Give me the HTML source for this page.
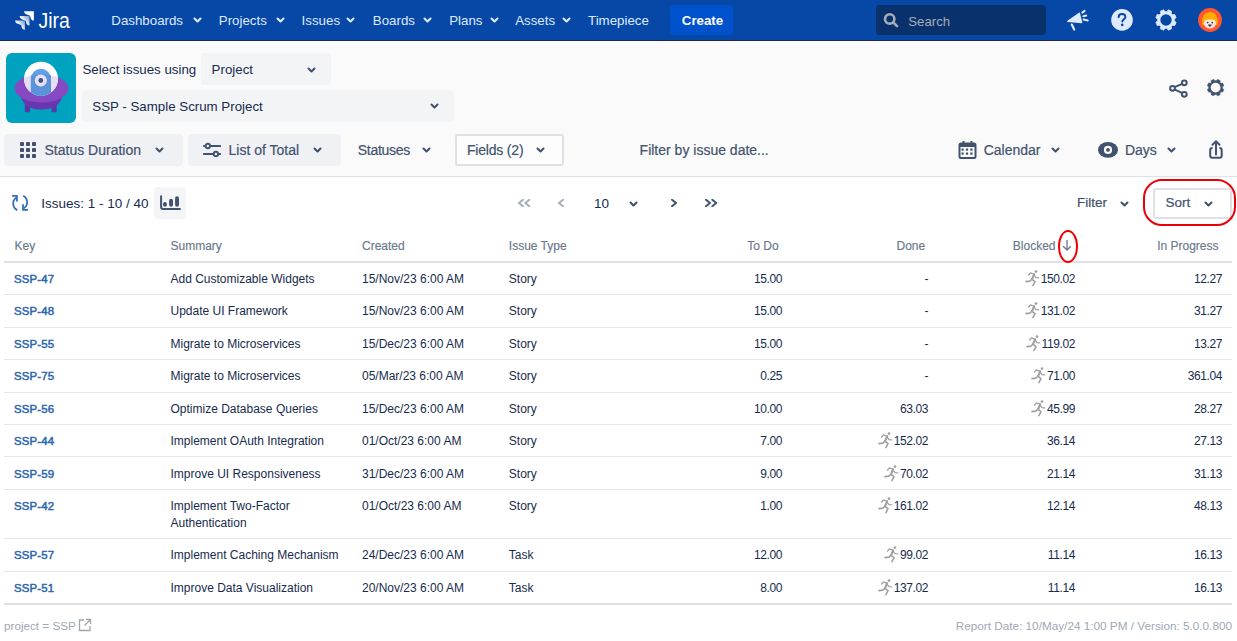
<!DOCTYPE html>
<html><head><meta charset="utf-8"><style>
html,body{margin:0;padding:0;width:1237px;height:641px;overflow:hidden;background:#fff;font-family:"Liberation Sans",sans-serif}
.t{position:absolute;white-space:nowrap;line-height:1}
.r{position:absolute}
.num{letter-spacing:-0.4px}.num svg{letter-spacing:0}
</style></head><body>
<div class="r" style="left:0px;top:0px;width:1237px;height:40px;background:#0747A6"></div>
<div class="r" style="left:0px;top:40px;width:1237px;height:1px;background:#1B2A4A"></div>
<svg class="r" style="left:12px;top:8px" width="26" height="24" viewBox="0 0 26 24">
<defs><linearGradient id="g1" x1="1" y1="0.1" x2="0.3" y2="0.7"><stop offset="0" stop-color="#fff" stop-opacity="0.45"/><stop offset="0.8" stop-color="#fff"/></linearGradient>
<path id="jl" d="M0 0 H9.9 V9.4 C8.2 9.2 6.6 8.4 6.3 5.2 C6 4.2 4 3.9 2 3.1 C1 2.6 0.3 1.5 0 0 Z"/></defs>
<use href="#jl" x="12" y="3.2" fill="#fff"/>
<use href="#jl" x="7.6" y="8.1" fill="url(#g1)"/>
<use href="#jl" x="3" y="12.4" fill="url(#g1)"/>
</svg>
<div class="t" style="left:38.5px;top:11.7px;font-size:19.5px;font-weight:400;color:#fff;transform:scaleY(1.1);transform-origin:0 85%">Jira</div>
<div class="t" style="left:111.3px;top:13.9px;font-size:13.3px;font-weight:400;color:#DEEBFF;">Dashboards</div>
<svg class="r" style="left:191.5px;top:16.2px" width="11" height="7.5" viewBox="-2 -2 11 7.5"><path d="M0.5 0.5 L3.5 3.5 L6.5 0.5" fill="none" stroke="#DEEBFF" stroke-width="2.1" stroke-linecap="round" stroke-linejoin="round"/></svg>
<div class="t" style="left:218.8px;top:13.9px;font-size:13.3px;font-weight:400;color:#DEEBFF;">Projects</div>
<svg class="r" style="left:274.5px;top:16.2px" width="11" height="7.5" viewBox="-2 -2 11 7.5"><path d="M0.5 0.5 L3.5 3.5 L6.5 0.5" fill="none" stroke="#DEEBFF" stroke-width="2.1" stroke-linecap="round" stroke-linejoin="round"/></svg>
<div class="t" style="left:301.6px;top:13.9px;font-size:13.3px;font-weight:400;color:#DEEBFF;">Issues</div>
<svg class="r" style="left:345.0px;top:16.2px" width="11" height="7.5" viewBox="-2 -2 11 7.5"><path d="M0.5 0.5 L3.5 3.5 L6.5 0.5" fill="none" stroke="#DEEBFF" stroke-width="2.1" stroke-linecap="round" stroke-linejoin="round"/></svg>
<div class="t" style="left:372.8px;top:13.9px;font-size:13.3px;font-weight:400;color:#DEEBFF;">Boards</div>
<svg class="r" style="left:421.5px;top:16.2px" width="11" height="7.5" viewBox="-2 -2 11 7.5"><path d="M0.5 0.5 L3.5 3.5 L6.5 0.5" fill="none" stroke="#DEEBFF" stroke-width="2.1" stroke-linecap="round" stroke-linejoin="round"/></svg>
<div class="t" style="left:449.2px;top:13.9px;font-size:13.3px;font-weight:400;color:#DEEBFF;">Plans</div>
<svg class="r" style="left:488.5px;top:16.2px" width="11" height="7.5" viewBox="-2 -2 11 7.5"><path d="M0.5 0.5 L3.5 3.5 L6.5 0.5" fill="none" stroke="#DEEBFF" stroke-width="2.1" stroke-linecap="round" stroke-linejoin="round"/></svg>
<div class="t" style="left:515.2px;top:13.9px;font-size:13.3px;font-weight:400;color:#DEEBFF;">Assets</div>
<svg class="r" style="left:561.0px;top:16.2px" width="11" height="7.5" viewBox="-2 -2 11 7.5"><path d="M0.5 0.5 L3.5 3.5 L6.5 0.5" fill="none" stroke="#DEEBFF" stroke-width="2.1" stroke-linecap="round" stroke-linejoin="round"/></svg>
<div class="t" style="left:588.0px;top:13.9px;font-size:13.3px;font-weight:400;color:#DEEBFF;">Timepiece</div>
<div class="r" style="left:670px;top:5px;width:63px;height:30px;background:#0052CC;border-radius:3px"></div>
<div class="t" style="left:681.8px;top:13.6px;font-size:13.3px;font-weight:700;color:#fff;">Create</div>
<div class="r" style="left:876px;top:5px;width:170px;height:30px;background:#09326C;border-radius:4px"></div>
<svg class="r" style="left:883px;top:12px" width="16" height="16" viewBox="0 0 16 16"><circle cx="6.7" cy="6.9" r="4.7" fill="none" stroke="#A5ADBA" stroke-width="2.6"/><path d="M10.2 10.4 L14 14.2" stroke="#A5ADBA" stroke-width="2.6" stroke-linecap="round"/></svg>
<div class="t" style="left:908.3px;top:14.8px;font-size:13.2px;font-weight:400;color:#A5ADBA;">Search</div>
<svg class="r" style="left:1064px;top:8px" width="28" height="24" viewBox="0 0 28 24">
<path d="M3.8 13.3 L15.3 5.2 L17.6 14.5 Z" fill="#DEEBFF" stroke="#DEEBFF" stroke-width="1.4" stroke-linejoin="round"/>
<path d="M7.8 16.6 L10.2 21.6" stroke="#DEEBFF" stroke-width="2.2" stroke-linecap="round"/>
<path d="M18.3 4.6 L20.6 2.9 M19.3 8.2 L22.2 7.6 M19.6 11.6 L23.8 12.4" stroke="#DEEBFF" stroke-width="2" stroke-linecap="round"/>
</svg>
<svg class="r" style="left:1110px;top:8px" width="24" height="24" viewBox="0 0 24 24">
<circle cx="12" cy="11.9" r="10.8" fill="#DEEBFF"/>
<path d="M8.6 9.2 C8.6 7.2 10 6 12 6 C14 6 15.4 7.3 15.4 9 C15.4 11 12.3 11.4 12.3 13.6" fill="none" stroke="#0747A6" stroke-width="1.9" stroke-linecap="round"/>
<circle cx="12.2" cy="16.9" r="1.3" fill="#0747A6"/>
</svg>
<svg class="r" style="left:1154px;top:8px" width="24" height="24" viewBox="0 0 24 24"><path d="M20.34 13.03 L22.15 14.27 L20.78 17.57 L18.62 17.17 L17.17 18.62 L17.57 20.78 L14.27 22.15 L13.03 20.34 L10.97 20.34 L9.73 22.15 L6.43 20.78 L6.83 18.62 L5.38 17.17 L3.22 17.57 L1.85 14.27 L3.66 13.03 L3.66 10.97 L1.85 9.73 L3.22 6.43 L5.38 6.83 L6.83 5.38 L6.43 3.22 L9.73 1.85 L10.97 3.66 L13.03 3.66 L14.27 1.85 L17.57 3.22 L17.17 5.38 L18.62 6.83 L20.78 6.43 L22.15 9.73 L20.34 10.97Z" fill="#DEEBFF" stroke="#DEEBFF" stroke-width="0.8" stroke-linejoin="round"/><circle cx="12" cy="12" r="5.7" fill="#0747A6"/></svg>
<svg class="r" style="left:1198px;top:8px" width="24" height="24" viewBox="0 0 24 24">
<circle cx="12" cy="12" r="11.9" fill="#FF5630"/>
<path d="M4.3 17 C3 8.5 7 4 11.9 4 C16.8 4 20.8 8.5 19.5 17 Z" fill="#FFAB00"/>
<ellipse cx="11.9" cy="15.2" rx="6.1" ry="5.2" fill="#FFE2D8"/>
<path d="M5.6 12.8 C6 8.8 8.8 7.4 11.9 7.4 C15 7.4 17.8 8.8 18.2 12.8 C16 11.2 8 11.2 5.6 12.8Z" fill="#FFAB00"/>
<circle cx="9.7" cy="14.6" r="0.85" fill="#253858"/><circle cx="14.2" cy="14.6" r="0.85" fill="#253858"/>
<path d="M10.1 16.6 H13.7 C13.7 19.2 10.1 19.2 10.1 16.6Z" fill="#253858"/><path d="M10.9 18.1 H12.9 C12.5 18.7 11.3 18.7 10.9 18.1Z" fill="#DE350B"/>
</svg>
<div class="r" style="left:0px;top:41px;width:1237px;height:135px;background:#FAFAFA"></div>
<div class="r" style="left:0px;top:176px;width:1237px;height:1px;background:#DFE1E6"></div>
<svg class="r" style="left:6px;top:53px" width="70" height="70" viewBox="0 0 70 70">
<defs><clipPath id="dome"><circle cx="35" cy="25.7" r="17"/></clipPath><clipPath id="body"><ellipse cx="35.5" cy="35.5" rx="27" ry="14"/></clipPath></defs>
<rect width="70" height="70" rx="6" fill="#00A3BF"/>
<rect x="18.8" y="45" width="5.2" height="14.3" rx="1" fill="#5A37A8"/><rect x="45.5" y="45" width="5.2" height="14.3" rx="1" fill="#5A37A8"/>
<path d="M14 40 Q16 56.5 35.5 56.5 Q55 56.5 57 40 Z" fill="#6A36B0"/>
<ellipse cx="35.5" cy="35.5" rx="27" ry="14" fill="#8549C2"/>
<circle cx="35" cy="25.7" r="17" fill="#fff"/>
<g clip-path="url(#dome)"><ellipse cx="35.5" cy="35.5" rx="27" ry="14" fill="#E7DDF3"/>
<path d="M24.9 50 V25.8 A10.05 10.05 0 0 1 45 25.8 V50 Z" fill="#5EA1E4"/>
<g clip-path="url(#body)"><path d="M24.9 50 V20 H45 V50 Z" fill="#5A93DA"/></g></g>
<circle cx="34.8" cy="27.5" r="6" fill="#E8E0F4"/>
<circle cx="34.8" cy="27.5" r="2.4" fill="#3F4E8E"/>
</svg>
<div class="t" style="left:82.4px;top:63.0px;font-size:13.3px;font-weight:400;color:#172B4D;">Select issues using</div>
<div class="r" style="left:201px;top:53px;width:130px;height:32px;background:#F3F4F6;border-radius:4px"></div>
<div class="t" style="left:211.6px;top:63.0px;font-size:13.3px;font-weight:400;color:#172B4D;">Project</div>
<svg class="r" style="left:305.7px;top:65.5px" width="11" height="7.5" viewBox="-2 -2 11 7.5"><path d="M0.5 0.5 L3.5 3.5 L6.5 0.5" fill="none" stroke="#42526E" stroke-width="2.1" stroke-linecap="round" stroke-linejoin="round"/></svg>
<div class="r" style="left:82px;top:90px;width:372px;height:32px;background:#F3F4F6;border-radius:4px"></div>
<div class="t" style="left:92.3px;top:100.2px;font-size:13.3px;font-weight:400;color:#172B4D;">SSP - Sample Scrum Project</div>
<svg class="r" style="left:428.5px;top:102.2px" width="11" height="7.5" viewBox="-2 -2 11 7.5"><path d="M0.5 0.5 L3.5 3.5 L6.5 0.5" fill="none" stroke="#42526E" stroke-width="2.1" stroke-linecap="round" stroke-linejoin="round"/></svg>
<svg class="r" style="left:1168px;top:77px" width="22" height="22" viewBox="0 0 22 22">
<circle cx="4.5" cy="11.3" r="2.4" fill="none" stroke="#42526E" stroke-width="2"/>
<circle cx="16.3" cy="5.8" r="2.4" fill="none" stroke="#42526E" stroke-width="2"/>
<circle cx="16.3" cy="17.3" r="2.4" fill="none" stroke="#42526E" stroke-width="2"/>
<path d="M6.5 10.2 L14.3 6.8 M6.5 12.4 L14.3 16.2" stroke="#42526E" stroke-width="2"/>
</svg>
<svg class="r" style="left:1205px;top:77px" width="22" height="22" viewBox="0 0 22 22"><path d="M17.45 11.44 L18.80 12.43 L17.69 15.10 L16.04 14.85 L14.85 16.04 L15.10 17.69 L12.43 18.80 L11.44 17.45 L9.76 17.45 L8.77 18.80 L6.10 17.69 L6.35 16.04 L5.16 14.85 L3.51 15.10 L2.40 12.43 L3.75 11.44 L3.75 9.76 L2.40 8.77 L3.51 6.10 L5.16 6.35 L6.35 5.16 L6.10 3.51 L8.77 2.40 L9.76 3.75 L11.44 3.75 L12.43 2.40 L15.10 3.51 L14.85 5.16 L16.04 6.35 L17.69 6.10 L18.80 8.77 L17.45 9.76Z" fill="#42526E" stroke="#42526E" stroke-width="0.6" stroke-linejoin="round"/><circle cx="10.6" cy="10.6" r="4.9" fill="#FAFAFA"/></svg>
<div class="r" style="left:4px;top:134px;width:179px;height:32px;background:#F0F1F4;border-radius:4px"></div>
<svg class="r" style="left:20px;top:142px" width="16" height="16" viewBox="0 0 16 16"><rect x="0" y="0" width="4" height="4" rx="0.8" fill="#42526E"/><rect x="0" y="6" width="4" height="4" rx="0.8" fill="#42526E"/><rect x="0" y="12" width="4" height="4" rx="0.8" fill="#42526E"/><rect x="6" y="0" width="4" height="4" rx="0.8" fill="#42526E"/><rect x="6" y="6" width="4" height="4" rx="0.8" fill="#42526E"/><rect x="6" y="12" width="4" height="4" rx="0.8" fill="#42526E"/><rect x="12" y="0" width="4" height="4" rx="0.8" fill="#42526E"/><rect x="12" y="6" width="4" height="4" rx="0.8" fill="#42526E"/><rect x="12" y="12" width="4" height="4" rx="0.8" fill="#42526E"/></svg>
<div class="t" style="left:44.5px;top:142.8px;font-size:14px;font-weight:400;color:#42526E;-webkit-text-stroke:0.2px #42526E">Status Duration</div>
<svg class="r" style="left:153.5px;top:146.2px" width="11" height="7.5" viewBox="-2 -2 11 7.5"><path d="M0.5 0.5 L3.5 3.5 L6.5 0.5" fill="none" stroke="#42526E" stroke-width="2.1" stroke-linecap="round" stroke-linejoin="round"/></svg>
<div class="r" style="left:188px;top:134px;width:153px;height:32px;background:#F0F1F4;border-radius:4px"></div>
<svg class="r" style="left:202px;top:142px" width="20" height="16" viewBox="0 0 20 16">
<path d="M1.2 4 H18.9 M1.2 11.9 H18.9" stroke="#42526E" stroke-width="2"/>
<circle cx="5.8" cy="4" r="2.2" fill="#F0F1F4" stroke="#42526E" stroke-width="1.9"/>
<circle cx="13.9" cy="11.9" r="2.2" fill="#F0F1F4" stroke="#42526E" stroke-width="1.9"/>
</svg>
<div class="t" style="left:228.5px;top:142.8px;font-size:14px;font-weight:400;color:#42526E;-webkit-text-stroke:0.2px #42526E">List of Total</div>
<svg class="r" style="left:311.5px;top:146.2px" width="11" height="7.5" viewBox="-2 -2 11 7.5"><path d="M0.5 0.5 L3.5 3.5 L6.5 0.5" fill="none" stroke="#42526E" stroke-width="2.1" stroke-linecap="round" stroke-linejoin="round"/></svg>
<div class="t" style="left:357.8px;top:142.8px;font-size:14px;font-weight:400;color:#42526E;-webkit-text-stroke:0.2px #42526E;letter-spacing:-0.3px">Statuses</div>
<svg class="r" style="left:420.5px;top:146.2px" width="11" height="7.5" viewBox="-2 -2 11 7.5"><path d="M0.5 0.5 L3.5 3.5 L6.5 0.5" fill="none" stroke="#42526E" stroke-width="2.1" stroke-linecap="round" stroke-linejoin="round"/></svg>
<div class="r" style="left:455px;top:134px;width:109px;height:32px;background:#FDFDFD;border:2px solid #DFE1E6;border-radius:3px;box-sizing:border-box"></div>
<div class="t" style="left:467.0px;top:142.8px;font-size:14px;font-weight:400;color:#42526E;-webkit-text-stroke:0.2px #42526E;letter-spacing:-0.2px">Fields (2)</div>
<svg class="r" style="left:534.5px;top:146.2px" width="11" height="7.5" viewBox="-2 -2 11 7.5"><path d="M0.5 0.5 L3.5 3.5 L6.5 0.5" fill="none" stroke="#42526E" stroke-width="2.1" stroke-linecap="round" stroke-linejoin="round"/></svg>
<div class="t" style="left:639.6px;top:142.8px;font-size:14px;font-weight:400;color:#42526E;-webkit-text-stroke:0.2px #42526E">Filter by issue date...</div>
<svg class="r" style="left:957.5px;top:140px" width="20" height="20" viewBox="0 0 20 20">
<rect x="1.5" y="3.5" width="16" height="14.5" rx="1.5" fill="none" stroke="#42526E" stroke-width="2"/>
<rect x="1.5" y="3.5" width="16" height="3.5" fill="#42526E"/>
<path d="M5.5 1 V4 M13.5 1 V4" stroke="#42526E" stroke-width="2"/><rect x="3.5" y="8.5" width="2.2" height="2.2" fill="#42526E"/><rect x="3.5" y="12.5" width="2.2" height="2.2" fill="#42526E"/><rect x="7.9" y="8.5" width="2.2" height="2.2" fill="#42526E"/><rect x="7.9" y="12.5" width="2.2" height="2.2" fill="#42526E"/><rect x="12.3" y="8.5" width="2.2" height="2.2" fill="#42526E"/><rect x="12.3" y="12.5" width="2.2" height="2.2" fill="#42526E"/>
</svg>
<div class="t" style="left:983.7px;top:142.8px;font-size:14px;font-weight:400;color:#42526E;-webkit-text-stroke:0.2px #42526E">Calendar</div>
<svg class="r" style="left:1049.5px;top:146.2px" width="11" height="7.5" viewBox="-2 -2 11 7.5"><path d="M0.5 0.5 L3.5 3.5 L6.5 0.5" fill="none" stroke="#42526E" stroke-width="2.1" stroke-linecap="round" stroke-linejoin="round"/></svg>
<svg class="r" style="left:1097px;top:142px" width="22" height="16" viewBox="0 0 22 16">
<ellipse cx="11" cy="7.9" rx="10" ry="7.9" fill="#42526E"/>
<circle cx="11" cy="7.9" r="4.1" fill="#FAFAFA"/><circle cx="11" cy="7.9" r="1.9" fill="#42526E"/>
</svg>
<div class="t" style="left:1124.9px;top:142.8px;font-size:14px;font-weight:400;color:#42526E;-webkit-text-stroke:0.2px #42526E">Days</div>
<svg class="r" style="left:1165.5px;top:146.2px" width="11" height="7.5" viewBox="-2 -2 11 7.5"><path d="M0.5 0.5 L3.5 3.5 L6.5 0.5" fill="none" stroke="#42526E" stroke-width="2.1" stroke-linecap="round" stroke-linejoin="round"/></svg>
<svg class="r" style="left:1206px;top:139px" width="20" height="22" viewBox="0 0 20 22">
<path d="M6.6 9 H6.2 Q4.2 9 4.2 11 V16.7 Q4.2 18.7 6.2 18.7 H13.7 Q15.7 18.7 15.7 16.7 V11 Q15.7 9 13.7 9 H13.4" fill="none" stroke="#42526E" stroke-width="2"/>
<path d="M10 15.5 V2.6 M6.5 5.8 L10 2.3 L13.5 5.8" fill="none" stroke="#42526E" stroke-width="2" stroke-linecap="round" stroke-linejoin="round"/>
</svg>
<div class="r" style="left:0px;top:177px;width:1237px;height:464px;background:#fff"></div>
<svg class="r" style="left:10px;top:193px" width="20" height="20" viewBox="0 0 20 20">
<g fill="none" stroke="#2F6DB5" stroke-width="1.75">
<path d="M6.4 4.6 A7.2 7.2 0 0 0 7.3 17.1"/>
<path d="M3 2.9 H6.9 V7.6" stroke-linecap="square"/>
<path d="M13.2 2.8 A7.2 7.2 0 0 1 13.8 15.3"/>
<path d="M17.1 16.8 H13 V12.2" stroke-linecap="square"/>
</g></svg>
<div class="t" style="left:41.2px;top:196.5px;font-size:13.5px;font-weight:400;color:#172B4D;">Issues: 1 - 10 / 40</div>
<div class="r" style="left:154px;top:187px;width:32px;height:32px;background:#F4F5F7;border-radius:4px"></div>
<svg class="r" style="left:160px;top:195px" width="21" height="16" viewBox="0 0 21 16">
<path d="M1.1 1.2 V12 Q1.1 13.9 3 13.9 H19.9" fill="none" stroke="#42526E" stroke-width="2" stroke-linecap="round"/>
<rect x="3" y="7.1" width="3.9" height="4.7" rx="1.95" fill="#42526E"/><rect x="9.1" y="3.8" width="3.9" height="8" rx="1.95" fill="#42526E"/><rect x="15.1" y="1.2" width="3.9" height="10.6" rx="1.95" fill="#42526E"/>
</svg>
<svg class="r" style="left:518.3px;top:199.3px" width="17.6" height="8" viewBox="0 0 17.6 8"><path d="M5.0 0.8 L1.0 4 L5.0 7.2" fill="none" stroke="#A5ADBA" stroke-width="2" stroke-linecap="round" stroke-linejoin="round"/><path d="M11.3 0.8 L7.3 4 L11.3 7.2" fill="none" stroke="#A5ADBA" stroke-width="2" stroke-linecap="round" stroke-linejoin="round"/></svg>
<svg class="r" style="left:558.3px;top:199.3px" width="11.3" height="8" viewBox="0 0 11.3 8"><path d="M5.0 0.8 L1.0 4 L5.0 7.2" fill="none" stroke="#A5ADBA" stroke-width="2" stroke-linecap="round" stroke-linejoin="round"/></svg>
<div class="t" style="left:594.1px;top:196.6px;font-size:13.5px;font-weight:400;color:#172B4D;">10</div>
<svg class="r" style="left:627.5px;top:199.8px" width="11" height="7.5" viewBox="-2 -2 11 7.5"><path d="M0.5 0.5 L3.5 3.5 L6.5 0.5" fill="none" stroke="#42526E" stroke-width="2.1" stroke-linecap="round" stroke-linejoin="round"/></svg>
<svg class="r" style="left:671.3px;top:199.3px" width="11.3" height="8" viewBox="0 0 11.3 8"><path d="M1.0 0.8 L5.0 4 L1.0 7.2" fill="none" stroke="#42526E" stroke-width="2" stroke-linecap="round" stroke-linejoin="round"/></svg>
<svg class="r" style="left:705.3px;top:199.3px" width="17.6" height="8" viewBox="0 0 17.6 8"><path d="M1.0 0.8 L5.0 4 L1.0 7.2" fill="none" stroke="#42526E" stroke-width="2" stroke-linecap="round" stroke-linejoin="round"/><path d="M7.3 0.8 L11.3 4 L7.3 7.2" fill="none" stroke="#42526E" stroke-width="2" stroke-linecap="round" stroke-linejoin="round"/></svg>
<div class="t" style="left:1076.9px;top:196.0px;font-size:13.5px;font-weight:400;color:#42526E;-webkit-text-stroke:0.2px #42526E">Filter</div>
<svg class="r" style="left:1118.5px;top:199.8px" width="11" height="7.5" viewBox="-2 -2 11 7.5"><path d="M0.5 0.5 L3.5 3.5 L6.5 0.5" fill="none" stroke="#42526E" stroke-width="2.1" stroke-linecap="round" stroke-linejoin="round"/></svg>
<div class="r" style="left:1153px;top:188px;width:79px;height:31px;background:#fff;border:2px solid #DFE1E6;border-radius:3px;box-sizing:border-box"></div>
<div class="t" style="left:1165.6px;top:196.0px;font-size:13.5px;font-weight:400;color:#42526E;-webkit-text-stroke:0.2px #42526E">Sort</div>
<svg class="r" style="left:1202.5px;top:199.8px" width="11" height="7.5" viewBox="-2 -2 11 7.5"><path d="M0.5 0.5 L3.5 3.5 L6.5 0.5" fill="none" stroke="#42526E" stroke-width="2.1" stroke-linecap="round" stroke-linejoin="round"/></svg>
<div class="r" style="left:1143px;top:179px;width:93px;height:47px;border:2.2px solid #EA0008;border-radius:19px;box-sizing:border-box"></div>
<div class="r" style="left:4px;top:261px;width:1228px;height:2px;background:#DFE1E6"></div>
<div class="t" style="left:14.6px;top:240.0px;font-size:12px;font-weight:400;color:#6B778C;-webkit-text-stroke:0.15px #6B778C">Key</div>
<div class="t" style="left:170.5px;top:240.0px;font-size:12px;font-weight:400;color:#6B778C;-webkit-text-stroke:0.15px #6B778C">Summary</div>
<div class="t" style="left:362.0px;top:240.0px;font-size:12px;font-weight:400;color:#6B778C;-webkit-text-stroke:0.15px #6B778C">Created</div>
<div class="t" style="left:508.8px;top:240.0px;font-size:12px;font-weight:400;color:#6B778C;-webkit-text-stroke:0.15px #6B778C">Issue Type</div>
<div class="t" style="left:378.6px;width:400px;text-align:right;top:240.0px;font-size:12px;font-weight:400;color:#6B778C;-webkit-text-stroke:0.15px #6B778C">To Do</div>
<div class="t" style="left:525.2px;width:400px;text-align:right;top:240.0px;font-size:12px;font-weight:400;color:#6B778C;-webkit-text-stroke:0.15px #6B778C">Done</div>
<div class="t" style="left:655.5px;width:400px;text-align:right;top:240.0px;font-size:12px;font-weight:400;color:#6B778C;-webkit-text-stroke:0.15px #6B778C">Blocked</div>
<svg class="r" style="left:1061px;top:238.3px" width="12" height="14" viewBox="0 0 12 14"><path d="M6 2 V12 M2.2 8.2 L6 12 L9.8 8.2" fill="none" stroke="#6B778C" stroke-width="1.3"/></svg>
<div class="r" style="left:1058px;top:230px;width:20.3px;height:33px;border:2px solid #F00000;border-radius:50%;box-sizing:border-box"></div>
<div class="t" style="left:818.5px;width:400px;text-align:right;top:240.0px;font-size:12px;font-weight:400;color:#6B778C;-webkit-text-stroke:0.15px #6B778C">In Progress</div>
<div class="r" style="left:4px;top:294px;width:1228px;height:1px;background:#E6E7EB"></div>
<div class="r" style="left:4px;top:327px;width:1228px;height:1px;background:#E6E7EB"></div>
<div class="r" style="left:4px;top:359px;width:1228px;height:1px;background:#E6E7EB"></div>
<div class="r" style="left:4px;top:392px;width:1228px;height:1px;background:#E6E7EB"></div>
<div class="r" style="left:4px;top:424px;width:1228px;height:1px;background:#E6E7EB"></div>
<div class="r" style="left:4px;top:456px;width:1228px;height:1px;background:#E6E7EB"></div>
<div class="r" style="left:4px;top:489px;width:1228px;height:1px;background:#E6E7EB"></div>
<div class="r" style="left:4px;top:538px;width:1228px;height:1px;background:#E6E7EB"></div>
<div class="r" style="left:4px;top:571px;width:1228px;height:1px;background:#E6E7EB"></div>
<div class="r" style="left:4px;top:603px;width:1228px;height:2px;background:#DFE1E6"></div>
<div class="t" style="left:14.1px;top:273.6px;font-size:11.4px;font-weight:400;color:#2D67AE;-webkit-text-stroke:0.5px #2D67AE;letter-spacing:0.15px">SSP-47</div>
<div class="t" style="left:170.5px;top:273.1px;font-size:12px;font-weight:400;color:#172B4D;">Add Customizable Widgets</div>
<div class="t" style="left:362.0px;top:273.1px;font-size:12px;font-weight:400;color:#172B4D;">15/Nov/23 6:00 AM</div>
<div class="t" style="left:508.8px;top:273.1px;font-size:12px;font-weight:400;color:#172B4D;">Story</div>
<div class="t" style="left:382.0px;width:400px;text-align:right;top:273.1px;font-size:12px;font-weight:400;color:#172B4D;letter-spacing:-0.4px;margin-right:-0.4px">15.00</div>
<div class="t" style="left:528.0px;width:400px;text-align:right;top:273.1px;font-size:12px;font-weight:400;color:#172B4D;letter-spacing:-0.4px;margin-right:-0.4px">-</div>
<div class="t num" style="left:675px;width:400px;text-align:right;top:273.1px;font-size:12px;color:#172B4D"><span style="display:inline-block;width:17px;height:1px;position:relative"><svg width="16" height="17" viewBox="0 0 16 17" style="position:absolute;left:0;top:-12.5px"><circle cx="12" cy="1.6" r="1.35" fill="#A0A0A0"/><g fill="none" stroke="#A0A0A0" stroke-linecap="round" stroke-linejoin="round"><path d="M10.1 4.3 L8.1 9.1" stroke-width="2.1"/><path d="M10.1 4.3 L6.4 2.9 L4.6 5" stroke-width="1.35"/><path d="M10.3 5.4 L12 7.6 L14.7 7.9" stroke-width="1.35"/><path d="M8.1 9.1 L5.8 11.1 L2.0 11.6" stroke-width="1.6"/><path d="M8.4 9.6 L11 11.6 L8.9 15.6" stroke-width="1.6"/></g></svg></span>150.02</div>
<div class="t" style="left:822.0px;width:400px;text-align:right;top:273.1px;font-size:12px;font-weight:400;color:#172B4D;letter-spacing:-0.4px;margin-right:-0.4px">12.27</div>
<div class="t" style="left:14.1px;top:305.6px;font-size:11.4px;font-weight:400;color:#2D67AE;-webkit-text-stroke:0.5px #2D67AE;letter-spacing:0.15px">SSP-48</div>
<div class="t" style="left:170.5px;top:305.1px;font-size:12px;font-weight:400;color:#172B4D;">Update UI Framework</div>
<div class="t" style="left:362.0px;top:305.1px;font-size:12px;font-weight:400;color:#172B4D;">15/Nov/23 6:00 AM</div>
<div class="t" style="left:508.8px;top:305.1px;font-size:12px;font-weight:400;color:#172B4D;">Story</div>
<div class="t" style="left:382.0px;width:400px;text-align:right;top:305.1px;font-size:12px;font-weight:400;color:#172B4D;letter-spacing:-0.4px;margin-right:-0.4px">15.00</div>
<div class="t" style="left:528.0px;width:400px;text-align:right;top:305.1px;font-size:12px;font-weight:400;color:#172B4D;letter-spacing:-0.4px;margin-right:-0.4px">-</div>
<div class="t num" style="left:675px;width:400px;text-align:right;top:305.1px;font-size:12px;color:#172B4D"><span style="display:inline-block;width:17px;height:1px;position:relative"><svg width="16" height="17" viewBox="0 0 16 17" style="position:absolute;left:0;top:-12.5px"><circle cx="12" cy="1.6" r="1.35" fill="#A0A0A0"/><g fill="none" stroke="#A0A0A0" stroke-linecap="round" stroke-linejoin="round"><path d="M10.1 4.3 L8.1 9.1" stroke-width="2.1"/><path d="M10.1 4.3 L6.4 2.9 L4.6 5" stroke-width="1.35"/><path d="M10.3 5.4 L12 7.6 L14.7 7.9" stroke-width="1.35"/><path d="M8.1 9.1 L5.8 11.1 L2.0 11.6" stroke-width="1.6"/><path d="M8.4 9.6 L11 11.6 L8.9 15.6" stroke-width="1.6"/></g></svg></span>131.02</div>
<div class="t" style="left:822.0px;width:400px;text-align:right;top:305.1px;font-size:12px;font-weight:400;color:#172B4D;letter-spacing:-0.4px;margin-right:-0.4px">31.27</div>
<div class="t" style="left:14.1px;top:338.6px;font-size:11.4px;font-weight:400;color:#2D67AE;-webkit-text-stroke:0.5px #2D67AE;letter-spacing:0.15px">SSP-55</div>
<div class="t" style="left:170.5px;top:338.1px;font-size:12px;font-weight:400;color:#172B4D;">Migrate to Microservices</div>
<div class="t" style="left:362.0px;top:338.1px;font-size:12px;font-weight:400;color:#172B4D;">15/Dec/23 6:00 AM</div>
<div class="t" style="left:508.8px;top:338.1px;font-size:12px;font-weight:400;color:#172B4D;">Story</div>
<div class="t" style="left:382.0px;width:400px;text-align:right;top:338.1px;font-size:12px;font-weight:400;color:#172B4D;letter-spacing:-0.4px;margin-right:-0.4px">15.00</div>
<div class="t" style="left:528.0px;width:400px;text-align:right;top:338.1px;font-size:12px;font-weight:400;color:#172B4D;letter-spacing:-0.4px;margin-right:-0.4px">-</div>
<div class="t num" style="left:675px;width:400px;text-align:right;top:338.1px;font-size:12px;color:#172B4D"><span style="display:inline-block;width:17px;height:1px;position:relative"><svg width="16" height="17" viewBox="0 0 16 17" style="position:absolute;left:0;top:-12.5px"><circle cx="12" cy="1.6" r="1.35" fill="#A0A0A0"/><g fill="none" stroke="#A0A0A0" stroke-linecap="round" stroke-linejoin="round"><path d="M10.1 4.3 L8.1 9.1" stroke-width="2.1"/><path d="M10.1 4.3 L6.4 2.9 L4.6 5" stroke-width="1.35"/><path d="M10.3 5.4 L12 7.6 L14.7 7.9" stroke-width="1.35"/><path d="M8.1 9.1 L5.8 11.1 L2.0 11.6" stroke-width="1.6"/><path d="M8.4 9.6 L11 11.6 L8.9 15.6" stroke-width="1.6"/></g></svg></span>119.02</div>
<div class="t" style="left:822.0px;width:400px;text-align:right;top:338.1px;font-size:12px;font-weight:400;color:#172B4D;letter-spacing:-0.4px;margin-right:-0.4px">13.27</div>
<div class="t" style="left:14.1px;top:370.6px;font-size:11.4px;font-weight:400;color:#2D67AE;-webkit-text-stroke:0.5px #2D67AE;letter-spacing:0.15px">SSP-75</div>
<div class="t" style="left:170.5px;top:370.1px;font-size:12px;font-weight:400;color:#172B4D;">Migrate to Microservices</div>
<div class="t" style="left:362.0px;top:370.1px;font-size:12px;font-weight:400;color:#172B4D;">05/Mar/23 6:00 AM</div>
<div class="t" style="left:508.8px;top:370.1px;font-size:12px;font-weight:400;color:#172B4D;">Story</div>
<div class="t" style="left:382.0px;width:400px;text-align:right;top:370.1px;font-size:12px;font-weight:400;color:#172B4D;letter-spacing:-0.4px;margin-right:-0.4px">0.25</div>
<div class="t" style="left:528.0px;width:400px;text-align:right;top:370.1px;font-size:12px;font-weight:400;color:#172B4D;letter-spacing:-0.4px;margin-right:-0.4px">-</div>
<div class="t num" style="left:675px;width:400px;text-align:right;top:370.1px;font-size:12px;color:#172B4D"><span style="display:inline-block;width:17px;height:1px;position:relative"><svg width="16" height="17" viewBox="0 0 16 17" style="position:absolute;left:0;top:-12.5px"><circle cx="12" cy="1.6" r="1.35" fill="#A0A0A0"/><g fill="none" stroke="#A0A0A0" stroke-linecap="round" stroke-linejoin="round"><path d="M10.1 4.3 L8.1 9.1" stroke-width="2.1"/><path d="M10.1 4.3 L6.4 2.9 L4.6 5" stroke-width="1.35"/><path d="M10.3 5.4 L12 7.6 L14.7 7.9" stroke-width="1.35"/><path d="M8.1 9.1 L5.8 11.1 L2.0 11.6" stroke-width="1.6"/><path d="M8.4 9.6 L11 11.6 L8.9 15.6" stroke-width="1.6"/></g></svg></span>71.00</div>
<div class="t" style="left:822.0px;width:400px;text-align:right;top:370.1px;font-size:12px;font-weight:400;color:#172B4D;letter-spacing:-0.4px;margin-right:-0.4px">361.04</div>
<div class="t" style="left:14.1px;top:403.6px;font-size:11.4px;font-weight:400;color:#2D67AE;-webkit-text-stroke:0.5px #2D67AE;letter-spacing:0.15px">SSP-56</div>
<div class="t" style="left:170.5px;top:403.1px;font-size:12px;font-weight:400;color:#172B4D;">Optimize Database Queries</div>
<div class="t" style="left:362.0px;top:403.1px;font-size:12px;font-weight:400;color:#172B4D;">15/Dec/23 6:00 AM</div>
<div class="t" style="left:508.8px;top:403.1px;font-size:12px;font-weight:400;color:#172B4D;">Story</div>
<div class="t" style="left:382.0px;width:400px;text-align:right;top:403.1px;font-size:12px;font-weight:400;color:#172B4D;letter-spacing:-0.4px;margin-right:-0.4px">10.00</div>
<div class="t" style="left:528.0px;width:400px;text-align:right;top:403.1px;font-size:12px;font-weight:400;color:#172B4D;letter-spacing:-0.4px;margin-right:-0.4px">63.03</div>
<div class="t num" style="left:675px;width:400px;text-align:right;top:403.1px;font-size:12px;color:#172B4D"><span style="display:inline-block;width:17px;height:1px;position:relative"><svg width="16" height="17" viewBox="0 0 16 17" style="position:absolute;left:0;top:-12.5px"><circle cx="12" cy="1.6" r="1.35" fill="#A0A0A0"/><g fill="none" stroke="#A0A0A0" stroke-linecap="round" stroke-linejoin="round"><path d="M10.1 4.3 L8.1 9.1" stroke-width="2.1"/><path d="M10.1 4.3 L6.4 2.9 L4.6 5" stroke-width="1.35"/><path d="M10.3 5.4 L12 7.6 L14.7 7.9" stroke-width="1.35"/><path d="M8.1 9.1 L5.8 11.1 L2.0 11.6" stroke-width="1.6"/><path d="M8.4 9.6 L11 11.6 L8.9 15.6" stroke-width="1.6"/></g></svg></span>45.99</div>
<div class="t" style="left:822.0px;width:400px;text-align:right;top:403.1px;font-size:12px;font-weight:400;color:#172B4D;letter-spacing:-0.4px;margin-right:-0.4px">28.27</div>
<div class="t" style="left:14.1px;top:435.6px;font-size:11.4px;font-weight:400;color:#2D67AE;-webkit-text-stroke:0.5px #2D67AE;letter-spacing:0.15px">SSP-44</div>
<div class="t" style="left:170.5px;top:435.1px;font-size:12px;font-weight:400;color:#172B4D;">Implement OAuth Integration</div>
<div class="t" style="left:362.0px;top:435.1px;font-size:12px;font-weight:400;color:#172B4D;">01/Oct/23 6:00 AM</div>
<div class="t" style="left:508.8px;top:435.1px;font-size:12px;font-weight:400;color:#172B4D;">Story</div>
<div class="t" style="left:382.0px;width:400px;text-align:right;top:435.1px;font-size:12px;font-weight:400;color:#172B4D;letter-spacing:-0.4px;margin-right:-0.4px">7.00</div>
<div class="t num" style="left:528px;width:400px;text-align:right;top:435.1px;font-size:12px;color:#172B4D"><span style="display:inline-block;width:17px;height:1px;position:relative"><svg width="16" height="17" viewBox="0 0 16 17" style="position:absolute;left:0;top:-12.5px"><circle cx="12" cy="1.6" r="1.35" fill="#A0A0A0"/><g fill="none" stroke="#A0A0A0" stroke-linecap="round" stroke-linejoin="round"><path d="M10.1 4.3 L8.1 9.1" stroke-width="2.1"/><path d="M10.1 4.3 L6.4 2.9 L4.6 5" stroke-width="1.35"/><path d="M10.3 5.4 L12 7.6 L14.7 7.9" stroke-width="1.35"/><path d="M8.1 9.1 L5.8 11.1 L2.0 11.6" stroke-width="1.6"/><path d="M8.4 9.6 L11 11.6 L8.9 15.6" stroke-width="1.6"/></g></svg></span>152.02</div>
<div class="t" style="left:675.0px;width:400px;text-align:right;top:435.1px;font-size:12px;font-weight:400;color:#172B4D;letter-spacing:-0.4px;margin-right:-0.4px">36.14</div>
<div class="t" style="left:822.0px;width:400px;text-align:right;top:435.1px;font-size:12px;font-weight:400;color:#172B4D;letter-spacing:-0.4px;margin-right:-0.4px">27.13</div>
<div class="t" style="left:14.1px;top:468.6px;font-size:11.4px;font-weight:400;color:#2D67AE;-webkit-text-stroke:0.5px #2D67AE;letter-spacing:0.15px">SSP-59</div>
<div class="t" style="left:170.5px;top:468.1px;font-size:12px;font-weight:400;color:#172B4D;">Improve UI Responsiveness</div>
<div class="t" style="left:362.0px;top:468.1px;font-size:12px;font-weight:400;color:#172B4D;">31/Dec/23 6:00 AM</div>
<div class="t" style="left:508.8px;top:468.1px;font-size:12px;font-weight:400;color:#172B4D;">Story</div>
<div class="t" style="left:382.0px;width:400px;text-align:right;top:468.1px;font-size:12px;font-weight:400;color:#172B4D;letter-spacing:-0.4px;margin-right:-0.4px">9.00</div>
<div class="t num" style="left:528px;width:400px;text-align:right;top:468.1px;font-size:12px;color:#172B4D"><span style="display:inline-block;width:17px;height:1px;position:relative"><svg width="16" height="17" viewBox="0 0 16 17" style="position:absolute;left:0;top:-12.5px"><circle cx="12" cy="1.6" r="1.35" fill="#A0A0A0"/><g fill="none" stroke="#A0A0A0" stroke-linecap="round" stroke-linejoin="round"><path d="M10.1 4.3 L8.1 9.1" stroke-width="2.1"/><path d="M10.1 4.3 L6.4 2.9 L4.6 5" stroke-width="1.35"/><path d="M10.3 5.4 L12 7.6 L14.7 7.9" stroke-width="1.35"/><path d="M8.1 9.1 L5.8 11.1 L2.0 11.6" stroke-width="1.6"/><path d="M8.4 9.6 L11 11.6 L8.9 15.6" stroke-width="1.6"/></g></svg></span>70.02</div>
<div class="t" style="left:675.0px;width:400px;text-align:right;top:468.1px;font-size:12px;font-weight:400;color:#172B4D;letter-spacing:-0.4px;margin-right:-0.4px">21.14</div>
<div class="t" style="left:822.0px;width:400px;text-align:right;top:468.1px;font-size:12px;font-weight:400;color:#172B4D;letter-spacing:-0.4px;margin-right:-0.4px">31.13</div>
<div class="t" style="left:14.1px;top:500.6px;font-size:11.4px;font-weight:400;color:#2D67AE;-webkit-text-stroke:0.5px #2D67AE;letter-spacing:0.15px">SSP-42</div>
<div class="t" style="left:170.5px;top:500.1px;font-size:12px;font-weight:400;color:#172B4D;">Implement Two-Factor</div>
<div class="t" style="left:170.5px;top:517.1px;font-size:12px;font-weight:400;color:#172B4D;">Authentication</div>
<div class="t" style="left:362.0px;top:500.1px;font-size:12px;font-weight:400;color:#172B4D;">01/Oct/23 6:00 AM</div>
<div class="t" style="left:508.8px;top:500.1px;font-size:12px;font-weight:400;color:#172B4D;">Story</div>
<div class="t" style="left:382.0px;width:400px;text-align:right;top:500.1px;font-size:12px;font-weight:400;color:#172B4D;letter-spacing:-0.4px;margin-right:-0.4px">1.00</div>
<div class="t num" style="left:528px;width:400px;text-align:right;top:500.1px;font-size:12px;color:#172B4D"><span style="display:inline-block;width:17px;height:1px;position:relative"><svg width="16" height="17" viewBox="0 0 16 17" style="position:absolute;left:0;top:-12.5px"><circle cx="12" cy="1.6" r="1.35" fill="#A0A0A0"/><g fill="none" stroke="#A0A0A0" stroke-linecap="round" stroke-linejoin="round"><path d="M10.1 4.3 L8.1 9.1" stroke-width="2.1"/><path d="M10.1 4.3 L6.4 2.9 L4.6 5" stroke-width="1.35"/><path d="M10.3 5.4 L12 7.6 L14.7 7.9" stroke-width="1.35"/><path d="M8.1 9.1 L5.8 11.1 L2.0 11.6" stroke-width="1.6"/><path d="M8.4 9.6 L11 11.6 L8.9 15.6" stroke-width="1.6"/></g></svg></span>161.02</div>
<div class="t" style="left:675.0px;width:400px;text-align:right;top:500.1px;font-size:12px;font-weight:400;color:#172B4D;letter-spacing:-0.4px;margin-right:-0.4px">12.14</div>
<div class="t" style="left:822.0px;width:400px;text-align:right;top:500.1px;font-size:12px;font-weight:400;color:#172B4D;letter-spacing:-0.4px;margin-right:-0.4px">48.13</div>
<div class="t" style="left:14.1px;top:549.6px;font-size:11.4px;font-weight:400;color:#2D67AE;-webkit-text-stroke:0.5px #2D67AE;letter-spacing:0.15px">SSP-57</div>
<div class="t" style="left:170.5px;top:549.1px;font-size:12px;font-weight:400;color:#172B4D;">Implement Caching Mechanism</div>
<div class="t" style="left:362.0px;top:549.1px;font-size:12px;font-weight:400;color:#172B4D;">24/Dec/23 6:00 AM</div>
<div class="t" style="left:508.8px;top:549.1px;font-size:12px;font-weight:400;color:#172B4D;">Task</div>
<div class="t" style="left:382.0px;width:400px;text-align:right;top:549.1px;font-size:12px;font-weight:400;color:#172B4D;letter-spacing:-0.4px;margin-right:-0.4px">12.00</div>
<div class="t num" style="left:528px;width:400px;text-align:right;top:549.1px;font-size:12px;color:#172B4D"><span style="display:inline-block;width:17px;height:1px;position:relative"><svg width="16" height="17" viewBox="0 0 16 17" style="position:absolute;left:0;top:-12.5px"><circle cx="12" cy="1.6" r="1.35" fill="#A0A0A0"/><g fill="none" stroke="#A0A0A0" stroke-linecap="round" stroke-linejoin="round"><path d="M10.1 4.3 L8.1 9.1" stroke-width="2.1"/><path d="M10.1 4.3 L6.4 2.9 L4.6 5" stroke-width="1.35"/><path d="M10.3 5.4 L12 7.6 L14.7 7.9" stroke-width="1.35"/><path d="M8.1 9.1 L5.8 11.1 L2.0 11.6" stroke-width="1.6"/><path d="M8.4 9.6 L11 11.6 L8.9 15.6" stroke-width="1.6"/></g></svg></span>99.02</div>
<div class="t" style="left:675.0px;width:400px;text-align:right;top:549.1px;font-size:12px;font-weight:400;color:#172B4D;letter-spacing:-0.4px;margin-right:-0.4px">11.14</div>
<div class="t" style="left:822.0px;width:400px;text-align:right;top:549.1px;font-size:12px;font-weight:400;color:#172B4D;letter-spacing:-0.4px;margin-right:-0.4px">16.13</div>
<div class="t" style="left:14.1px;top:582.6px;font-size:11.4px;font-weight:400;color:#2D67AE;-webkit-text-stroke:0.5px #2D67AE;letter-spacing:0.15px">SSP-51</div>
<div class="t" style="left:170.5px;top:582.1px;font-size:12px;font-weight:400;color:#172B4D;">Improve Data Visualization</div>
<div class="t" style="left:362.0px;top:582.1px;font-size:12px;font-weight:400;color:#172B4D;">20/Nov/23 6:00 AM</div>
<div class="t" style="left:508.8px;top:582.1px;font-size:12px;font-weight:400;color:#172B4D;">Task</div>
<div class="t" style="left:382.0px;width:400px;text-align:right;top:582.1px;font-size:12px;font-weight:400;color:#172B4D;letter-spacing:-0.4px;margin-right:-0.4px">8.00</div>
<div class="t num" style="left:528px;width:400px;text-align:right;top:582.1px;font-size:12px;color:#172B4D"><span style="display:inline-block;width:17px;height:1px;position:relative"><svg width="16" height="17" viewBox="0 0 16 17" style="position:absolute;left:0;top:-12.5px"><circle cx="12" cy="1.6" r="1.35" fill="#A0A0A0"/><g fill="none" stroke="#A0A0A0" stroke-linecap="round" stroke-linejoin="round"><path d="M10.1 4.3 L8.1 9.1" stroke-width="2.1"/><path d="M10.1 4.3 L6.4 2.9 L4.6 5" stroke-width="1.35"/><path d="M10.3 5.4 L12 7.6 L14.7 7.9" stroke-width="1.35"/><path d="M8.1 9.1 L5.8 11.1 L2.0 11.6" stroke-width="1.6"/><path d="M8.4 9.6 L11 11.6 L8.9 15.6" stroke-width="1.6"/></g></svg></span>137.02</div>
<div class="t" style="left:675.0px;width:400px;text-align:right;top:582.1px;font-size:12px;font-weight:400;color:#172B4D;letter-spacing:-0.4px;margin-right:-0.4px">11.14</div>
<div class="t" style="left:822.0px;width:400px;text-align:right;top:582.1px;font-size:12px;font-weight:400;color:#172B4D;letter-spacing:-0.4px;margin-right:-0.4px">16.13</div>
<div class="t" style="left:4.0px;top:619.9px;font-size:11.7px;font-weight:400;color:#A0A8B6;">project = SSP</div>
<svg class="r" style="left:78px;top:618px" width="14" height="14" viewBox="0 0 14 14"><path d="M6 2 H1.5 V12.5 H12 V8" fill="none" stroke="#A5A5A5" stroke-width="1.3"/><path d="M8 1.5 H12.5 V6 M12.5 1.5 L6.5 7.5" fill="none" stroke="#A5A5A5" stroke-width="1.3"/></svg>
<div class="t" style="left:832.0px;width:400px;text-align:right;top:620.0px;font-size:11.75px;font-weight:400;color:#A0A8B6;">Report Date: 10/May/24 1:00 PM / Version: 5.0.0.800</div>
</body></html>
